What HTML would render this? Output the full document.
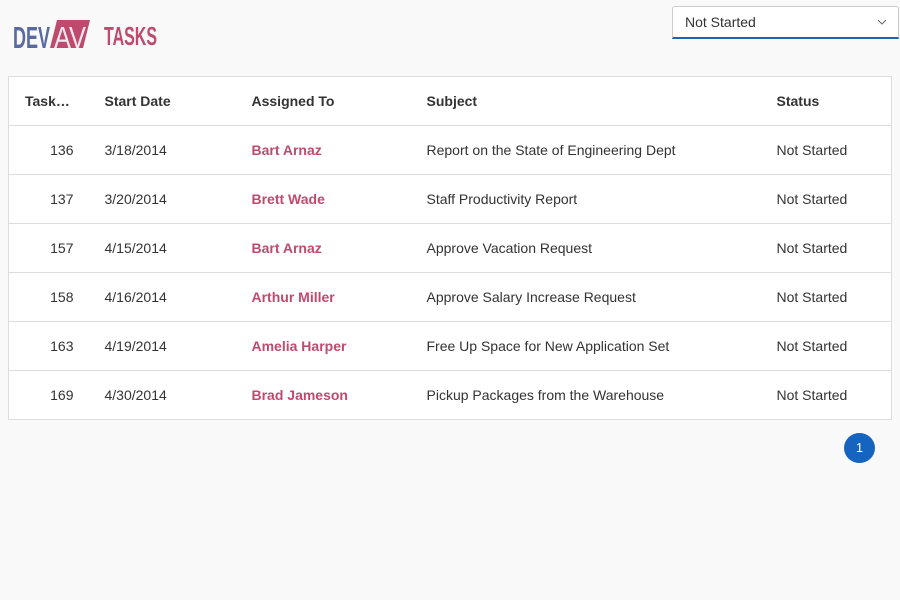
<!DOCTYPE html>
<html><head><style>
body{margin:0;background:#f9f9f9;font-family:"Liberation Sans",sans-serif;font-size:14px;color:#333;width:900px;height:600px;position:relative;overflow:hidden}
.sel{position:absolute;left:672px;top:6px;width:225px;height:30px;background:#fff;border:1px solid #ccc;border-bottom:2px solid #1565c0;border-radius:3px 3px 0 0;box-sizing:content-box}
.sel span{position:absolute;left:12px;top:7px;color:#333}
table{position:absolute;left:8px;top:76px;width:884px;border-collapse:collapse;background:#fff;border:1px solid #ddd}
td{height:48px;border-bottom:1px solid #ddd;padding:0;vertical-align:middle}
tr.h td{font-weight:bold;color:#333}
.n{text-align:right;padding-right:31px}
.a{color:#c04a6e;font-weight:bold}
.pg{position:absolute;left:844px;top:433px;width:31px;height:30px;border-radius:50%;background:#1565c0;color:#fff;font-size:13px;text-align:center;line-height:30px}
</style></head><body>
<svg style="position:absolute;left:0;top:0" width="180" height="60">
<text x="13" y="48" fill="#5a6aa0" font-family="Liberation Sans" font-weight="bold" font-size="31" textLength="37" lengthAdjust="spacingAndGlyphs">DEV</text>
<polygon points="57,20 90,20 83,48 50,48" fill="#c04a6e"/>
<text x="54" y="48" fill="#f0e8ee" font-family="Liberation Sans" font-size="31" textLength="32" lengthAdjust="spacingAndGlyphs">AV</text>
<text x="104" y="45" fill="#c04a6e" font-family="Liberation Sans" font-weight="bold" font-size="26" textLength="53" lengthAdjust="spacingAndGlyphs">TASKS</text>
</svg>
<div class="sel"><span>Not Started</span>
<svg style="position:absolute;left:204px;top:11px" width="10" height="8"><path d="M1 2 L5 6 L9 2" stroke="#666" fill="none" stroke-width="1"/></svg></div>
<table>
<colgroup><col style="width:96px"><col style="width:147px"><col style="width:175px"><col style="width:350px"><col></colgroup>
<tr class="h"><td style="padding-left:16px">Task…</td><td>Start Date</td><td>Assigned To</td><td>Subject</td><td>Status</td></tr>
<tr><td class="n">136</td><td>3/18/2014</td><td class="a">Bart Arnaz</td><td>Report on the State of Engineering Dept</td><td>Not Started</td></tr>
<tr><td class="n">137</td><td>3/20/2014</td><td class="a">Brett Wade</td><td>Staff Productivity Report</td><td>Not Started</td></tr>
<tr><td class="n">157</td><td>4/15/2014</td><td class="a">Bart Arnaz</td><td>Approve Vacation Request</td><td>Not Started</td></tr>
<tr><td class="n">158</td><td>4/16/2014</td><td class="a">Arthur Miller</td><td>Approve Salary Increase Request</td><td>Not Started</td></tr>
<tr><td class="n">163</td><td>4/19/2014</td><td class="a">Amelia Harper</td><td>Free Up Space for New Application Set</td><td>Not Started</td></tr>
<tr><td class="n">169</td><td>4/30/2014</td><td class="a">Brad Jameson</td><td>Pickup Packages from the Warehouse</td><td>Not Started</td></tr>
</table>
<div class="pg">1</div>
</body></html>
